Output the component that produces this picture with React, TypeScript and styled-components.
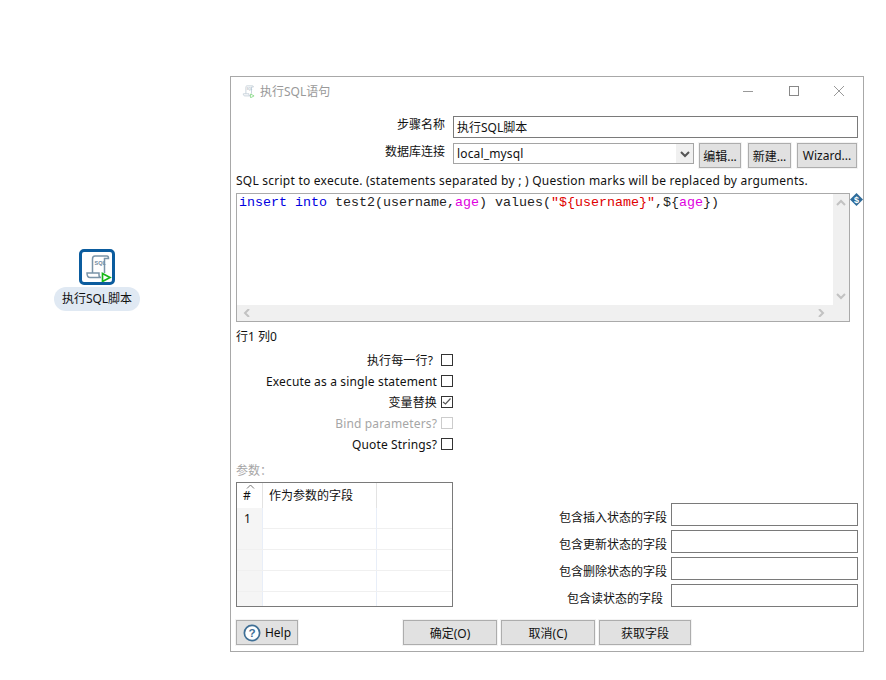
import React from "react";
import styled, { createGlobalStyle } from "styled-components";

const GlobalStyle = createGlobalStyle`
  html, body {
    margin: 0;
    padding: 0;
    background: #fff;
  }
  body {
    font-family: "Noto Sans", "Noto Sans CJK SC", sans-serif;
    font-size: 12px;
    color: #111;
  }
`;

const Page = styled.div`
  position: relative;
  width: 886px;
  height: 680px;
  padding: 76px 0 0 230px;
  box-sizing: border-box;
`;

const CanvasNode = styled.div`
  position: absolute;
  left: 54px;
  top: 249px;
  width: 86px;
  display: flex;
  flex-direction: column;
  align-items: center;
  gap: 2px;
`;
const NodeIcon = styled.div`
  width: 36px;
  height: 36px;
  box-sizing: border-box;
  border: 3px solid #0b5c9e;
  border-radius: 5px;
  background: #fff;
`;
const NodeLabel = styled.div`
  width: 86px;
  height: 24px;
  line-height: 23px;
  text-align: center;
  background: #e0e9f3;
  border-radius: 12px;
`;

const Dialog = styled.div`
  width: 634px;
  height: 576px;
  box-sizing: border-box;
  border: 1px solid #a8a8a8;
  background: #fff;
`;
const TitleBar = styled.div`
  height: 28px;
  display: flex;
  align-items: center;
  padding: 0 1px 0 10px;
`;
const TitleText = styled.div`
  margin-left: 5px;
  flex: 1;
  color: #999;
`;
const WinButton = styled.div`
  width: 45.5px;
  height: 28px;
  display: flex;
  align-items: center;
  justify-content: center;
`;

const Body = styled.div`
  padding: 11px 5px 0 5px;
`;
const FormRows = styled.div`
  display: flex;
  flex-direction: column;
  gap: 5px;
`;
const FormRow = styled.div`
  display: grid;
  grid-template-columns: 209px 1fr;
  column-gap: 8px;
  align-items: start;
`;
const RowLabel = styled.div`
  text-align: right;
  line-height: 18px;
`;
const TextInput = styled.div<{ $height?: number }>`
  height: ${(p) => p.$height ?? 22}px;
  box-sizing: border-box;
  border: 1px solid #7a7a7a;
  padding-left: 3px;
  line-height: 21px;
  background: #fff;
`;
const ConnectionRow = styled.div`
  display: flex;
  align-items: flex-start;
`;
const Combo = styled.div`
  width: 241px;
  height: 21px;
  box-sizing: border-box;
  border: 1px solid #a5a5a5;
  padding-left: 3px;
  line-height: 19px;
  letter-spacing: 0.15px;
  display: flex;
  justify-content: space-between;
`;
const ComboArrow = styled.div`
  width: 17px;
  height: 19px;
  background: #f0f0f0;
  display: flex;
  align-items: center;
  justify-content: center;
`;
const Button = styled.div<{ $width: number; $left?: number }>`
  width: ${(p) => p.$width}px;
  margin-left: ${(p) => p.$left ?? 0}px;
  height: 25px;
  box-sizing: border-box;
  border: 1px solid #adadad;
  outline: 1px solid #f3f3f3;
  background: #e1e1e1;
  display: flex;
  align-items: center;
  justify-content: center;
  gap: 4px;
`;
const ScriptHint = styled.div`
  height: 18px;
  line-height: 18px;
  margin-top: 4px;
  letter-spacing: 0.24px;
  white-space: nowrap;
`;

const EditorWrap = styled.div`
  position: relative;
  margin-top: 3px;
  width: 614px;
`;
const Editor = styled.div`
  height: 129px;
  box-sizing: border-box;
  border: 1px solid #aaa;
  display: grid;
  grid-template-columns: 1fr 16px;
  grid-template-rows: 1fr 16px;
`;
const Code = styled.pre`
  margin: 0;
  padding: 1px 0 0 2px;
  font-family: "Liberation Mono", monospace;
  font-size: 13.33px;
  line-height: 15px;
  color: #222;
`;
const Keyword = styled.span`
  color: #0000e0;
`;
const FieldName = styled.span`
  color: #e000e0;
`;
const Str = styled.span`
  color: #e00000;
`;
const VScroll = styled.div`
  background: #f0f0f0;
  display: flex;
  flex-direction: column;
  justify-content: space-between;
  align-items: center;
  padding: 5px 0;
`;
const HScroll = styled.div`
  background: #f0f0f0;
  display: flex;
  justify-content: space-between;
  align-items: center;
  padding: 0 6px;
`;
const Corner = styled.div`
  background: #f0f0f0;
`;
const Marker = styled.svg`
  position: absolute;
  right: -13px;
  top: 0;
`;

const CursorPos = styled.div`
  height: 18px;
  line-height: 18px;
  margin-top: 6px;
`;

const Checks = styled.div`
  margin-top: 5px;
  width: 217px;
  display: flex;
  flex-direction: column;
  gap: 4px;
`;
const CheckRow = styled.div<{ $disabled?: boolean; $pad?: number }>`
  height: 17px;
  display: flex;
  justify-content: flex-end;
  align-items: center;
  gap: ${(p) => 4 + (p.$pad ?? 0)}px;
  letter-spacing: 0.15px;
  color: ${(p) => (p.$disabled ? "#a6a6a6" : "#111")};
`;
const CheckLabel = styled.span<{ $latin?: boolean }>`
  padding-top: ${(p) => (p.$latin ? 2 : 0)}px;
`;
const CheckBox = styled.div<{ $disabled?: boolean }>`
  width: 10px;
  height: 10px;
  box-sizing: content-box;
  border: 1px solid ${(p) => (p.$disabled ? "#ccc" : "#333")};
  display: flex;
  align-items: center;
  justify-content: center;
`;

const Lower = styled.div`
  margin-top: 10px;
  display: flex;
  justify-content: space-between;
  align-items: flex-end;
`;
const ParamBlock = styled.div`
  width: 217px;
`;
const ParamTitle = styled.div`
  height: 18px;
  line-height: 18px;
  color: #a6a6a6;
  margin-bottom: 2px;
`;
const Table = styled.div`
  height: 125px;
  box-sizing: border-box;
  border: 1px solid #7a7a7a;
  overflow: hidden;
`;
const TableRow = styled.div<{ $header?: boolean }>`
  display: grid;
  grid-template-columns: 26px 114px 1fr;
  height: ${(p) => (p.$header ? 25 : 21)}px;
  box-sizing: border-box;
  border-bottom: ${(p) => (p.$header ? "none" : "1px solid #f0f0f0")};
`;
const HeaderCell = styled.div`
  position: relative;
  border-right: 1px solid #e3e3e3;
  padding-left: 6px;
  line-height: 25px;
`;
const SortCaret = styled.svg`
  position: absolute;
  left: 9px;
  top: 1px;
`;
const IndexCell = styled.div`
  background: #f5f5f5;
  border-right: 1px solid #e8eef8;
  padding-left: 7px;
  line-height: 21px;
`;
const DataCell = styled.div`
  border-right: 1px solid #e8eef8;
`;

const Fields = styled.div`
  width: 299px;
  display: flex;
  flex-direction: column;
  gap: 4px;
`;
const FieldRow = styled.div<{ $labelRight?: number }>`
  display: grid;
  grid-template-columns: 108px 187px;
  column-gap: 4px;
  align-items: center;
  text-align: right;
  white-space: nowrap;
  span {
    padding-top: 4px;
    padding-right: ${(p) => p.$labelRight ?? 0}px;
  }
`;

const Footer = styled.div`
  margin-top: 13px;
  display: flex;
  align-items: center;
`;

const closeIcon = "M1 1l10 10M11 1L1 11";

function ScrollGlyph({ size, faded }: { size: number; faded?: boolean }) {
  return (
    <svg width={size} height={size} viewBox="0 0 30 30" opacity={faded ? 0.55 : 1}>
      <path d="M13 4h12c1 0 1.5 1 1.5 2.5h-4V21M13 4c-2 0-2.5 1.5-2.5 3v14" fill="none" stroke="#7a94a8" strokeWidth="1.5" />
      <path d="M5 21h12v2c0 1.5 1 2.5 2 2.5H8c-2 0-3-2-3-4.5z" fill="#fff" stroke="#7a94a8" strokeWidth="1.5" />
      <text x="12.5" y="13" fontSize="5.5" fontWeight="700" fill="#6f8aa0" fontFamily="Liberation Sans, sans-serif">SQL</text>
      <path d="M20.5 21.5l7.5 4-7.5 4z" fill="#fff" stroke="#18b818" strokeWidth="1.7" />
    </svg>
  );
}

function Chevron({ dir }: { dir: "up" | "down" | "left" | "right" }) {
  const d = {
    up: "M1 6l4-4 4 4",
    down: "M1 2l4 4 4-4",
    left: "M6 0l-4 4 4 4",
    right: "M2 0l4 4-4 4",
  }[dir];
  return (
    <svg width="10" height="8" viewBox="0 0 10 8">
      <path d={d} fill="none" stroke="#c2c2c2" strokeWidth="2" />
    </svg>
  );
}

const checks = [
  { label: "执行每一行?", checked: false, pad: 4 },
  { label: "Execute as a single statement", checked: false, latin: true },
  { label: "变量替换", checked: true },
  { label: "Bind parameters?", checked: false, disabled: true, latin: true },
  { label: "Quote Strings?", checked: false, latin: true },
];

const stateFields = [
  { label: "包含插入状态的字段" },
  { label: "包含更新状态的字段" },
  { label: "包含删除状态的字段" },
  { label: "包含读状态的字段", right: 4 },
];

export default function App() {
  return (
    <Page>
      <GlobalStyle />
      <CanvasNode>
        <NodeIcon>
          <ScrollGlyph size={30} />
        </NodeIcon>
        <NodeLabel>执行SQL脚本</NodeLabel>
      </CanvasNode>

      <Dialog>
        <TitleBar>
          <ScrollGlyph size={14} faded />
          <TitleText>执行SQL语句</TitleText>
          <WinButton>
            <svg width="12" height="12"><path d="M1 6.5h10" stroke="#999" /></svg>
          </WinButton>
          <WinButton>
            <svg width="12" height="12"><rect x="1.5" y="1.5" width="9" height="9" fill="none" stroke="#888" /></svg>
          </WinButton>
          <WinButton>
            <svg width="12" height="12"><path d={closeIcon} stroke="#999" fill="none" /></svg>
          </WinButton>
        </TitleBar>

        <Body>
          <FormRows>
            <FormRow>
              <RowLabel>步骤名称</RowLabel>
              <TextInput>执行SQL脚本</TextInput>
            </FormRow>
            <FormRow>
              <RowLabel>数据库连接</RowLabel>
              <ConnectionRow>
                <Combo>
                  local_mysql
                  <ComboArrow>
                    <svg width="10" height="8" viewBox="0 0 10 8">
                      <path d="M1 2l4 4 4-4" fill="none" stroke="#555" strokeWidth="2" />
                    </svg>
                  </ComboArrow>
                </Combo>
                <Button $width={42} $left={5}>编辑...</Button>
                <Button $width={43} $left={7}>新建...</Button>
                <Button $width={60} $left={6}>Wizard...</Button>
              </ConnectionRow>
            </FormRow>
          </FormRows>
          <ScriptHint>SQL script to execute. (statements separated by ; ) Question marks will be replaced by arguments.</ScriptHint>

          <EditorWrap>
            <Editor>
              <Code>
                <Keyword>insert</Keyword> <Keyword>into</Keyword> test2(username,<FieldName>age</FieldName>) values(<Str>"{"${username}"}"</Str>,{"${"}<FieldName>age</FieldName>{"})"}
              </Code>
              <VScroll>
                <Chevron dir="up" />
                <Chevron dir="down" />
              </VScroll>
              <HScroll>
                <Chevron dir="left" />
                <Chevron dir="right" />
              </HScroll>
              <Corner />
            </Editor>
            <Marker width="13" height="13" viewBox="0 0 13 13">
              <path d="M6.5 0L13 6.5 6.5 13 0 6.5z" fill="#2f6b99" />
              <text x="6.5" y="10" textAnchor="middle" fontSize="9" fontWeight="700" fill="#fff" fontFamily="Liberation Sans, sans-serif">$</text>
            </Marker>
          </EditorWrap>

          <CursorPos>行1 列0</CursorPos>

          <Checks>
            {checks.map((c) => (
              <CheckRow key={c.label} $disabled={c.disabled} $pad={c.pad}>
                <CheckLabel $latin={c.latin}>{c.label}</CheckLabel>
                <CheckBox $disabled={c.disabled}>
                  {c.checked && (
                    <svg width="10" height="10" viewBox="0 0 10 10">
                      <path d="M1 5l2.5 2 5-5.5" fill="none" stroke="#555" strokeWidth="1.2" />
                    </svg>
                  )}
                </CheckBox>
              </CheckRow>
            ))}
          </Checks>

          <Lower>
            <ParamBlock>
              <ParamTitle>参数：</ParamTitle>
              <Table>
                <TableRow $header>
                  <HeaderCell>
                    <SortCaret width="9" height="5" viewBox="0 0 9 5">
                      <path d="M1 4.5l3.5-3.5 3.5 3.5" fill="none" stroke="#777" />
                    </SortCaret>
                    #
                  </HeaderCell>
                  <HeaderCell>作为参数的字段</HeaderCell>
                  <div />
                </TableRow>
                {["1", "", "", "", ""].map((n, i) => (
                  <TableRow key={i}>
                    <IndexCell>{n}</IndexCell>
                    <DataCell />
                    <div />
                  </TableRow>
                ))}
              </Table>
            </ParamBlock>
            <Fields>
              {stateFields.map((f) => (
                <FieldRow key={f.label} $labelRight={f.right}>
                  <span>{f.label}</span>
                  <TextInput $height={23} />
                </FieldRow>
              ))}
            </Fields>
          </Lower>

          <Footer>
            <Button $width={62}>
              <svg width="18" height="18" viewBox="0 0 17 17">
                <circle cx="8.5" cy="8.5" r="7.2" fill="#fff" stroke="#3f6f96" strokeWidth="1.6" />
                <text x="8.5" y="12.5" textAnchor="middle" fontSize="11" fontWeight="700" fill="#3f6f96" fontFamily="Liberation Sans, sans-serif">?</text>
              </svg>
              Help
            </Button>
            <Button $width={94} $left={105}>确定(O)</Button>
            <Button $width={94} $left={4}>取消(C)</Button>
            <Button $width={92} $left={4}>获取字段</Button>
          </Footer>
        </Body>
      </Dialog>
    </Page>
  );
}
